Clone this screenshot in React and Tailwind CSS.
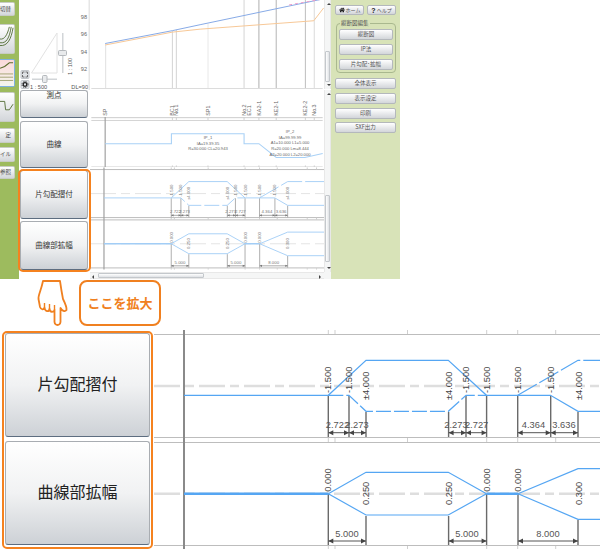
import React from 'react';
import { FaHome } from 'react-icons/fa';

const jp = '"Noto Sans CJK JP", "Noto Sans", sans-serif';
const num = '"Liberation Sans", sans-serif';

const btnClass = 'flex items-center justify-center rounded-[2px] border border-[#b4b8bc] bg-gradient-to-b from-white to-[#d3d6da] text-[#555]';

// big-chart coordinates; the small chart is the same drawing at 1/2.145
const ticks = [328.3, 335, 407.5, 486.7, 517.7, 555.7, 620, 640];
const topLines = [
  { d: 'M184 395.3H328.3L366 360.3H448.3L486.5 395.3H550.5L578 411.3H660' },
  { d: 'M328.3 395.3H349L366 411.3H448.3L466 395.3H486.5', dash: '15 3' },
  { d: 'M517.7 395.3L578 360.3H660', dash: '22 3' },
];
const wideLines = [
  { d: 'M184 493.7H328.3M486.5 493.7H518', w: 2.5 },
  { d: 'M328.3 493.7L366 472.3H448.3L486.5 493.7', w: 1.2 },
  { d: 'M328.3 493.7L366 515H448.3L486.5 493.7', w: 1.2 },
  { d: 'M518 493.7L578 468.7H660', w: 1.2 },
  { d: 'M518 493.7L578 519.3H660', w: 1.2 },
];
const drops = [
  [328.3, 396, 437], [349, 396, 437], [366, 412, 437], [448.6, 412, 437], [466, 396, 437],
  [486.6, 396, 437], [517.7, 396, 437], [550.7, 396, 437], [578, 412, 437],
  [328.3, 494, 545], [366, 516, 545], [448.6, 516, 545], [486.6, 494, 545], [518, 494, 545], [578, 520, 545],
];
const upright = [
  [328.3, 393, '-1.500'], [349, 393, '-1.500'], [366, 400, '±4.000'], [448.6, 400, '±4.000'], [466, 393, '-1.500'],
  [486.6, 393, '-1.500'], [517.7, 393, '-1.500'], [550.7, 393, '-1.500'], [578.6, 400, '±4.000'],
  [328.3, 491.7, '0.000'], [366, 505, '0.250'], [448.6, 505, '0.250'], [486.6, 491.7, '0.000'], [518, 491.7, '0.000'], [578.6, 505, '0.300'],
];
const dims = [
  [328.3, 349, 432.7, 337.5, 428, '2.722'], [349, 366, 432.7, 357, 428, '2.273'],
  [448.6, 466, 432.7, 456, 428, '2.273'], [466, 486.6, 432.7, 476.6, 428, '2.727'],
  [517.7, 550.7, 432.7, 533.5, 428, '4.364'], [550.7, 578, 432.7, 564, 428, '3.636'],
  [328.3, 366, 541, 347, 536.5, '5.000'], [448.6, 486.6, 541, 467, 536.5, '5.000'], [518, 578, 541, 548, 536.5, '8.000'],
];

const Profile = ({ width, height, blue, thin }) => (
  <svg width={width} height={height} viewBox="154 330 502 219" className="block shrink-0">
    <g>
      {[334.5, 437.5, 442.5, 545.5].map((y) => (
        <line key={y} x1="154" y1={y} x2="656" y2={y} stroke="#bdbdbd" strokeWidth="1" vectorEffect="non-scaling-stroke" />
      ))}
      {ticks.map((x) => (
        <path key={x} d={`M${x} 330V334M${x} 438V442M${x} 546V549`} stroke="#cfcfcf" strokeWidth="1" vectorEffect="non-scaling-stroke" />
      ))}
      <path d="M154 386H656M154 493.7H656" stroke="#dedede" strokeWidth={thin ? 0.8 : 2.5} strokeDasharray="26 5 9 5" vectorEffect="non-scaling-stroke" />
      <line x1="184" y1="330" x2="184" y2="549" stroke={thin ? '#a0a0a0' : '#8a8a8a'} strokeWidth={thin ? 1.2 : 2} vectorEffect="non-scaling-stroke" />
      {drops.map(([x, y1, y2], i) => (
        <line key={i} x1={x} y1={y1} x2={x} y2={y2} stroke={thin ? '#9a9a9a' : '#6a6a6a'} strokeWidth={thin ? 0.8 : 1.4} vectorEffect="non-scaling-stroke" />
      ))}
      {topLines.map((l, i) => (
        <path key={i} d={l.d} fill="none" stroke={blue} strokeWidth={thin ? 0.9 : 1.2} strokeDasharray={l.dash} vectorEffect="non-scaling-stroke" />
      ))}
      {wideLines.map((l, i) => (
        <path key={i} d={l.d} fill="none" stroke={blue} strokeWidth={thin ? (l.w > 2 ? 1.3 : 0.9) : l.w} vectorEffect="non-scaling-stroke" />
      ))}
      {dims.map(([x1, x2, y, tx, ty, label]) => (
        <g key={`${tx}-${y}`}>
          <line x1={x1} y1={y} x2={x2} y2={y} stroke={thin ? '#888' : '#555'} strokeWidth={thin ? 0.7 : 1} vectorEffect="non-scaling-stroke" />
          <path d={`M${x1} ${y}l5 -2.5v5zM${x2} ${y}l-5 -2.5v5z`} fill={thin ? '#777' : '#444'} />
          <text x={tx} y={ty} textAnchor="middle" fontSize="9.3" fill={thin ? '#777' : '#555'} fontFamily={num}>{label}</text>
        </g>
      ))}
      {upright.map(([x, y, label], i) => (
        <text key={i} transform={`rotate(-90 ${x} ${y})`} x={x} y={y + 3.2} fontSize="9.3" fill={thin ? '#777' : '#444'} fontFamily={num}>{label}</text>
      ))}
    </g>
  </svg>
);

const ZoomControl = () => (
  <svg width="70" height="90" viewBox="20 0 70 90" className="block">
    <path d="M31.5 73L57 33V73Z" fill="#fff" stroke="#e2e2e2" />
    <rect x="62" y="33" width="1.5" height="40" fill="#d2d5d8" />
    <rect x="58.5" y="50.5" width="8" height="5" rx="1" fill="#e8eaec" stroke="#b4b8bc" />
    <rect x="32" y="78.5" width="25" height="1.5" fill="#d2d5d8" />
    <rect x="42.5" y="75.5" width="4.5" height="7" rx="1" fill="#e8eaec" stroke="#b4b8bc" />
    <rect x="21" y="70.5" width="8" height="8" rx="1" fill="#dfe2e5" stroke="#c2c6ca" />
    <path d="M22.5 72h2M22.5 72v2M27.5 72h-2M27.5 72v2M22.5 77h2M22.5 77v-2M27.5 77h-2M27.5 77v-2" stroke="#555" strokeWidth="0.8" />
    <rect x="21" y="80.5" width="8" height="8" rx="1" fill="#e4e7ea" stroke="#c2c6ca" />
    <circle cx="25" cy="84.5" r="1.8" fill="none" stroke="#222" strokeWidth="1.3" />
    <circle cx="25" cy="84.5" r="3" fill="none" stroke="#222" strokeWidth="1" strokeDasharray="1 0.9" />
    <text x="30" y="89" fontSize="5.6" fill="#555" fontFamily={num}>1 : 500</text>
    <text x="88" y="89" fontSize="5.6" fill="#555" fontFamily={num} textAnchor="end">DL=90</text>
    <text transform="rotate(-90 72 75)" x="72" y="75" fontSize="5.6" fill="#555" fontFamily={num}>1 : 100</text>
    {[[17, '98'], [34, '96'], [52, '94'], [69, '92']].map(([y, t]) => (
      <text key={t} x="87" y={y + 2} fontSize="5.6" fill="#666" textAnchor="end" fontFamily={num}>{t}</text>
    ))}
    <rect x="88.5" y="0" width="1.5" height="90" fill="#e6e6e6" />
  </svg>
);

const stations = [
  [104, 'SP'], [172, 'BC1'], [176, 'No.1'], [208, 'SP1'], [244.5, 'No.2'], [250, 'EC1'],
  [259.5, 'KA2-1'], [277, 'KE2-1'], [306.5, 'KE2-2'], [315.5, 'No.3'],
];
const gridLines = [
  [172, 31, '#d2d2d2'], [176, 30, '#d2d2d2'], [208, 24, '#e8e8e8'], [244.5, 0, '#d4d4d4'],
  [259.5, 0, '#adadad'], [277, 0, '#b4b4b4'], [306.5, 0, '#bcbcbc'], [315.5, 0, '#dadada'],
];

const MainChart = () => (
  <svg width="234" height="90" viewBox="90 0 234 90" className="block">
    <line x1="104.5" y1="44" x2="104.5" y2="90" stroke="#e0e0e0" />
    {gridLines.map(([x, y, c]) => (
      <line key={x} x1={x} y1={y} x2={x} y2="90" stroke={c} />
    ))}
    <rect x="90" y="89" width="234" height="2" fill="#dcdcdc" />
    <path d="M104 45.5L172 32.5L200 29.5L315 21L325 8" fill="none" stroke="#f7c796" />
    <path d="M104 44L172 31L200 25L324 -1" fill="none" stroke="#86a9e6" />
    <path d="M290 5L324 -1" fill="none" stroke="#ee9cc8" strokeDasharray="3 3" />
  </svg>
);

const StationRow = () => (
  <svg width="234" height="28" viewBox="90 90 234 28" className="block">
    {stations.map(([x, t]) => (
      <text key={t} transform={`rotate(-90 ${x} 117)`} x={x} y={119} fontSize="5.4" fill="#666" fontFamily={num}>{t}</text>
    ))}
  </svg>
);

const CurveRow = () => (
  <svg width="234" height="51" viewBox="90 118 234 51" className="block">
    <rect x="90" y="118" width="234" height="1.2" fill="#d4d4d4" />
    <rect x="90" y="121" width="234" height="1" fill="#d4d4d4" />
    <rect x="90" y="168" width="234" height="1" fill="#d4d4d4" />
    <line x1="104" y1="118" x2="104" y2="169" stroke="#a0a0a0" strokeWidth="1.2" />
    {[172, 176, 208, 244.5, 259.5, 277, 306.5, 315.5].map((x) => (
      <path key={x} d={`M${x} 118V121M${x} 167V169`} stroke="#cfcfcf" />
    ))}
    <path d="M104 145H171V135H244.5V145H259.5L277 159H306L324 155" fill="none" stroke="#a9d1f6" strokeWidth="1.1" />
    {[[208, 140, 'IP_1'], [208, 146, 'IA=19.39.35'], [208, 151, 'R=30.000 CL=20.943'],
      [291, 134, 'IP_2'], [291, 140, 'IA=99.99.99'], [291, 145.5, 'A1=10.000  L1=5.000'], [291, 151, 'R=20.000  Lm=8.444'], [291, 157, 'A2=20.000 L2=20.000']].map(([x, y, t]) => (
      <text key={t} x={x} y={y} fontSize="4.2" fill="#666" textAnchor="middle" fontFamily={num}>{t}</text>
    ))}
  </svg>
);

const SideBtn = ({ h, mt, active, children }) => (
  <div
    className={`w-[15px] rounded-r-[2px] overflow-hidden flex items-center justify-end bg-gradient-to-b ${active ? 'from-[#fbd9d9] to-[#f4f6ee] border border-l-0 border-[#7fb2e0]' : 'from-white to-[#d3d6da] border border-l-0 border-[#c8ccc4]'}`}
    style={{ height: h, marginTop: mt }}
  >
    {children}
  </div>
);

const SideLabel = ({ children }) => (
  <span className="whitespace-nowrap text-[5.5px] text-[#444] pr-[3px]">{children}</span>
);

const Sidebar = () => (
  <div className="w-[19px] h-full bg-[#9dbb5e] flex flex-col overflow-hidden">
    <SideBtn h={14} mt={2}><SideLabel>切替</SideLabel></SideBtn>
    <SideBtn h={30} mt={8}>
      <svg width="15" height="30" viewBox="0 0 15 30">
        <path d="M0 19C7 20 10 14 12 2M0 15C5 16 8 10 10 2M0 22C8 23 12 15 14 3" fill="none" stroke="#56703a" strokeWidth="1" />
      </svg>
    </SideBtn>
    <SideBtn h={28} mt={5} active>
      <svg width="15" height="28" viewBox="0 0 15 28">
        <path d="M0 9L5 7L10 3H14" fill="none" stroke="#5b6b2c" strokeWidth="1.2" />
        <path d="M0 15H14M0 18.5H14M0 22H14" stroke="#8c8f55" strokeWidth="0.8" />
      </svg>
    </SideBtn>
    <SideBtn h={30} mt={5}>
      <svg width="15" height="30" viewBox="0 0 15 30">
        <path d="M0 9H5L6 18H10L14 12" fill="none" stroke="#56703a" strokeWidth="1" />
      </svg>
    </SideBtn>
    <SideBtn h={15} mt={6}><SideLabel>定</SideLabel></SideBtn>
    <SideBtn h={15} mt={4}><SideLabel>イル</SideLabel></SideBtn>
    <SideBtn h={13} mt={4}><SideLabel>参照</SideLabel></SideBtn>
  </div>
);

const VScroll = ({ height, top, thumb }) => (
  <div className="relative w-[7px] bg-[#f5f6f6] border-x border-[#e8e8e8]" style={{ height }}>
    <span className="absolute left-[1.5px] top-[3px] w-0 h-0 border-x-[2px] border-b-[2px] border-x-transparent border-b-[#444]" />
    <div className="absolute left-0 w-[5px] rounded-[1px] border border-[#c4c8cc] bg-gradient-to-r from-white to-[#dfe2e5]" style={{ top, height: thumb }} />
    <span className="absolute left-[1.5px] bottom-[3px] w-0 h-0 border-x-[2px] border-t-[2px] border-x-transparent border-t-[#444]" />
  </div>
);

const HScroll = () => (
  <div className="relative h-[7px] bg-[#f5f6f6] border-y border-[#e8e8e8]">
    <span className="absolute left-[2px] top-[1.5px] w-0 h-0 border-y-[2px] border-r-[2px] border-y-transparent border-r-[#444]" />
    <div className="absolute left-[8px] top-0 h-[5px] w-[106px] rounded-[1px] border border-[#c4c8cc] bg-gradient-to-b from-white to-[#dfe2e5]" />
    <span className="absolute right-[3px] top-[1.5px] w-0 h-0 border-y-[2px] border-l-[2px] border-y-transparent border-l-[#444]" />
  </div>
);

const PanelBtn = ({ label, w = 'w-[61px]', mt = 'mt-[4px]' }) => (
  <div className={`${btnClass} ${w} ${mt} h-[11px] text-[5.5px] shrink-0`}>{label}</div>
);

const RightPanel = () => (
  <div className="w-[69px] h-full bg-[#d8e3b8] pl-[4px] pt-[5px] flex flex-col" style={{ fontFamily: jp }}>
    <div className="flex gap-[3px]">
      <div className={`${btnClass} w-[29px] h-[10px] text-[5px] gap-[1px]`}><FaHome className="text-[#222] text-[6px]" />ホーム</div>
      <div className={`${btnClass} w-[29px] h-[10px] text-[5px] gap-[1px]`}><span className="font-bold text-[7px] text-[#222] leading-none" style={{ fontFamily: num }}>?</span>ヘルプ</div>
    </div>
    <div className="relative mt-[8px] ml-[1px] w-[60px] h-[50px] rounded-[4px] border border-[#a9b88e] pl-[2px] pt-[5px]">
      <span className="absolute left-[3px] -top-[4px] bg-[#d8e3b8] px-[1px] text-[5.5px] leading-[7px] text-[#555]">縦断図編集</span>
      <PanelBtn label="縦断図" w="w-[54px]" mt="mt-0" />
      <PanelBtn label="IP法" w="w-[54px]" />
      <PanelBtn label="片勾配･拡幅" w="w-[54px]" />
    </div>
    <PanelBtn label="全体表示" mt="mt-[5px]" />
    <PanelBtn label="表示設定" />
    <PanelBtn label="印刷" />
    <PanelBtn label="SXF出力" mt="mt-[3px]" />
  </div>
);

const RowBtn = ({ h, mt, size, pb = 0, color = 'text-[#222]', items = 'items-center', children }) => (
  <div
    className={`flex justify-center ${items} ${color} rounded-[3px] border border-[#a9adb2] border-b-[#5d6d80] bg-gradient-to-b from-white via-[#f1f2f3] to-[#cdd1d6] shrink-0`}
    style={{ height: h, marginTop: mt, paddingBottom: pb, fontSize: size, lineHeight: `${size + 1}px`, fontFamily: jp }}
  >
    {children}
  </div>
);

const Hand = () => (
  <svg width="32" height="48" viewBox="37 278 32 48" className="shrink-0">
    <path
      d="M43 280H60C61 287 62 293 63 298C65 302 67 306 66.5 309C65 311 62 310 60.5 307V321C60 325 55 325 54.5 321V309C53.5 311.5 50 311.5 49.5 308C49 311 45 311 44.5 306.5C44 309 41 309 40 306L38.5 298C38 294 41 290 43 280Z"
      fill="#fff"
      stroke="#f08020"
      strokeWidth="1.8"
      strokeLinejoin="round"
    />
    <path d="M44.5 306.5V302M49.5 308V303M54.5 309V304" fill="none" stroke="#f08020" strokeWidth="1.4" />
  </svg>
);

export default function App() {
  return (
    <div className="w-[600px] h-[550px] bg-white overflow-hidden flex flex-col" style={{ fontFamily: jp }}>
      <div className="relative w-[400px] h-[279px] flex shrink-0">
        <Sidebar />
        <div className="w-[71px] pl-[1px] flex flex-col">
          <ZoomControl />
          <div className="w-[68px] pl-0">
            <RowBtn h={28} mt={0} size={7.5} color="text-[#333]" items="items-start">測点</RowBtn>
            <RowBtn h={47} mt={3} size={7.5} color="text-[#333]">曲線</RowBtn>
            <RowBtn h={49} mt={2} size={7.5} color="text-[#333]">片勾配摺付</RowBtn>
            <RowBtn h={49} mt={2} size={7.5} color="text-[#333]">曲線部拡幅</RowBtn>
          </div>
        </div>
        <div className="w-[234px] flex flex-col">
          <MainChart />
          <StationRow />
          <CurveRow />
          <Profile width={234} height={103} blue="#a2cdf6" thin />
          <div className="h-[2px]" />
          <HScroll />
        </div>
        <div className="w-[7px] flex flex-col">
          <VScroll height={89} top={51} thumb={31} />
          <div className="h-[1px] bg-white" />
          <VScroll height={182} top={105} thumb={67} />
          <div className="h-[7px] bg-[#f5f6f6]" />
        </div>
        <RightPanel />
        <div className="absolute left-[18px] top-[169px] w-[73px] h-[103px] rounded-[5px] border-2 border-[#f5821f]" />
      </div>

      <div className="h-[51px] flex pl-[37px] shrink-0">
        <Hand />
        <div className="ml-[10px] mt-[1px] w-[82px] h-[46px] rounded-[8px] border-2 border-[#f08020] flex items-center justify-center text-[13px] font-bold text-[#f08020]">
          ここを拡大
        </div>
      </div>

      <div className="h-[220px] flex">
        <div className="ml-[2px] mt-[1px] w-[151px] h-[218px] rounded-[5px] border-2 border-[#f5821f] px-[1px] shrink-0">
          <RowBtn h={104} mt={0} size={16} pb={4}>片勾配摺付</RowBtn>
          <RowBtn h={104} mt={4} size={16} pb={4}>曲線部拡幅</RowBtn>
        </div>
        <div className="ml-[1px]">
          <Profile width={502} height={219} blue="#55a6f3" />
        </div>
      </div>
    </div>
  );
}
